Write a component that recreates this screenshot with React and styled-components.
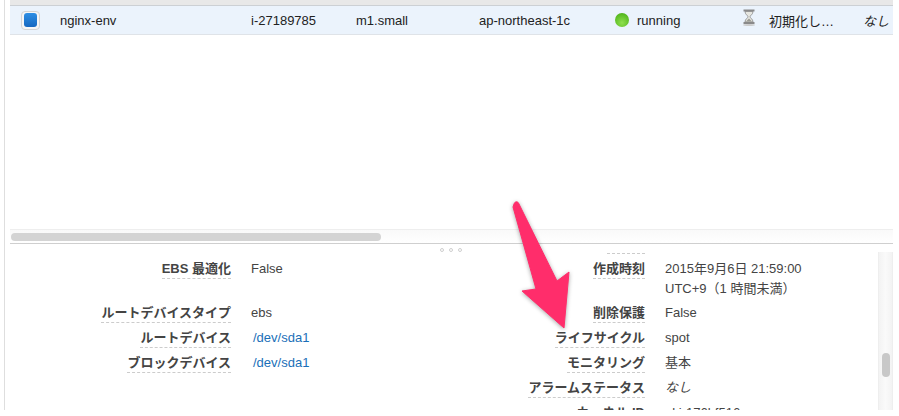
import React from "react";
import styled, { createGlobalStyle } from "styled-components";

const Global = createGlobalStyle`
  html, body { margin: 0; padding: 0; background: #fff; }
  body { font-family: "Liberation Sans", "Noto Sans CJK JP", sans-serif; font-size: 13px; }
`;

const Frame = styled.div`
  position: relative;
  width: 889px;
  height: 410px;
  margin-left: 4px;
  padding-left: 5px;
  box-sizing: border-box;
  border-left: 1px solid #dedede;
  display: flex;
  flex-direction: column;
  overflow: hidden;
`;
const HeaderBar = styled.div`
  height: 5px;
  flex: none;
  background: #e8e8e8;
  border-bottom: 1px solid #ccd0d4;
`;
const Row = styled.div`
  height: 29px;
  flex: none;
  box-sizing: border-box;
  display: grid;
  grid-template-columns: 50px 191px 105px 123px 136px 128px 120px 1fr;
  align-items: center;
  background: #ebf3fc;
  border-bottom: 1px solid #dfe3e8;
  color: #222;
  white-space: nowrap;
`;
const CheckCell = styled.div`
  display: flex;
  padding-left: 11px;
`;
const Check = styled.div`
  width: 19px;
  height: 19px;
  box-sizing: border-box;
  border: 1px solid #d4d4d4;
  border-radius: 4px;
  background: #f6f6f6;
  display: flex;
  align-items: center;
  justify-content: center;
`;
const CheckFill = styled.div`
  width: 13px;
  height: 14px;
  border-radius: 3px;
  background: linear-gradient(#2f8fe4, #1668c0);
`;
const IconCell = styled.div`
  display: flex;
  align-items: center;
  gap: ${(p) => p.$gap}px;
`;
const Dot = styled.div`
  width: 14px;
  height: 14px;
  border-radius: 50%;
  background: radial-gradient(circle at 50% 70%, #8fe04e, #55b81f 75%, #3f9a17);
`;
const Italic = styled.div`
  font-style: italic;
`;
const Spacer = styled.div`
  flex: 1;
`;
const ScrollTrack = styled.div`
  height: 14px;
  flex: none;
  box-sizing: border-box;
  border-top: 1px solid #eeeeee;
  background: linear-gradient(#f9f9f9, #fff);
  display: flex;
  align-items: center;
  padding-left: 1px;
`;
const ScrollThumb = styled.div`
  width: 370px;
  height: 8px;
  border-radius: 4px;
  background: #d4d4d4;
`;
const Divider = styled.div`
  height: 9px;
  flex: none;
  border-top: 1px solid #cfcfcf;
  display: flex;
  justify-content: center;
  align-items: flex-end;
  gap: 5px;
  padding-right: 2px;
  box-sizing: border-box;
`;
const GripDot = styled.div`
  width: 4px;
  height: 4px;
  box-sizing: border-box;
  border: 1px solid #cfcfcf;
  border-radius: 50%;
`;
const Details = styled.div`
  height: 158px;
  flex: none;
  display: grid;
  grid-template-columns: 221px 147px 267px 1fr 15px;
  overflow: hidden;
`;
const Rows = styled.div`
  display: flex;
  flex-direction: column;
  grid-column: ${(p) => p.$col};
`;
const DRow = styled.div`
  display: grid;
  grid-template-columns: ${(p) => p.$label}px 240px;
  column-gap: 20px;
  height: ${(p) => p.$h}px;
  flex: none;
  padding-top: ${(p) => p.$pt || 0}px;
  box-sizing: border-box;
`;
const LabelCell = styled.div`
  text-align: right;
`;
const Label = styled.span`
  display: inline-block;
  font-weight: 700;
  color: #444;
  line-height: 16px;
  padding-bottom: 1px;
  border-bottom: 1px dashed #ccc;
  white-space: nowrap;
`;
const Value = styled.div`
  color: ${(p) => (p.$link ? "#1a6fb8" : "#444")};
  font-style: ${(p) => (p.$italic ? "italic" : "normal")};
  line-height: 20px;
  margin-left: ${(p) => (p.$link ? 2 : 0)}px;
  margin-top: -2px;
  white-space: nowrap;
`;
const VTrack = styled.div`
  grid-column: 5;
  background: linear-gradient(90deg, #f3f3f3, #fafafa 50%, #f3f3f3);
  border-left: 1px solid #eee;
  border-right: 1px solid #eee;
  box-sizing: border-box;
  display: flex;
  justify-content: center;
  padding-top: 101px;
`;
const VThumb = styled.div`
  width: 8px;
  height: 24px;
  border-radius: 4px;
  background: #c8c8c8;
`;
const StubLabel = styled.div`
  width: 38px;
  margin-left: 229px;
  border-bottom: 1px dashed #ccc;
  height: 1px;
`;
const Arrow = styled.svg`
  position: absolute;
  left: 496px;
  top: 198px;
  filter: drop-shadow(0 1px 2px rgba(0, 0, 0, 0.35));
`;
const HourglassSvg = styled.svg`
  margin-bottom: 5px;
  margin-left: -1px;
  margin-right: 1px;
`;

const Hourglass = () => (
  <HourglassSvg width="14" height="17" viewBox="0 0 14 17">
    <rect x="1.5" y="0.5" width="11" height="2" fill="#8a8a8a" />
    <rect x="1.5" y="13" width="11" height="2" fill="#8a8a8a" />
    <path d="M3 2.5 H11 C11 5.5 8 6.5 8 7.8 C8 9 11 10 11 13 H3 C3 10 6 9 6 7.8 C6 6.5 3 5.5 3 2.5 Z" fill="#e6e6e0" stroke="#888" strokeWidth="0.8" />
    <path d="M4 12.6 L7 9.5 L10 12.6 Z" fill="#9a9a92" />
    <ellipse cx="7" cy="16" rx="6" ry="1" fill="#ccc" />
  </HourglassSvg>
);

const leftRows = [
  { h: 53, pt: 9, label: "EBS 最適化", value: "False" },
  { h: 25, label: "ルートデバイスタイプ", value: "ebs" },
  { h: 25, label: "ルートデバイス", value: "/dev/sda1", link: true },
  { h: 25, label: "ブロックデバイス", value: "/dev/sda1", link: true },
];
const rightRows = [
  { h: 51, pt: 7, label: "作成時刻", value: ["2015年9月6日 21:59:00", "UTC+9（1 時間未満）"] },
  { h: 25, label: "削除保護", value: ["False"] },
  { h: 25, label: "ライフサイクル", value: ["spot"] },
  { h: 25, label: "モニタリング", value: ["基本"] },
  { h: 25, label: "アラームステータス", value: ["なし"], italic: true },
  { h: 25, label: "カーネル ID", value: ["aki-176bf516"] },
];

export default function App() {
  return (
    <>
      <Global />
      <Frame>
        <HeaderBar />
        <Row>
          <CheckCell>
            <Check>
              <CheckFill />
            </Check>
          </CheckCell>
          <div>nginx-env</div>
          <div>i-27189785</div>
          <div>m1.small</div>
          <div>ap-northeast-1c</div>
          <IconCell $gap={8}>
            <Dot />
            <span>running</span>
          </IconCell>
          <IconCell $gap={12}>
            <Hourglass />
            <span>初期化し…</span>
          </IconCell>
          <Italic>なし</Italic>
        </Row>
        <Spacer />
        <ScrollTrack>
          <ScrollThumb />
        </ScrollTrack>
        <Divider>
          <GripDot />
          <GripDot />
          <GripDot />
        </Divider>
        <Details>
          <Rows $col={1}>
            {leftRows.map((r) => (
              <DRow key={r.label} $label={221} $h={r.h} $pt={r.pt}>
                <LabelCell>
                  <Label>{r.label}</Label>
                </LabelCell>
                <Value $link={r.link}>{r.value}</Value>
              </DRow>
            ))}
          </Rows>
          <Rows $col={3}>
            <StubLabel />
            {rightRows.map((r) => (
              <DRow key={r.label} $label={267} $h={r.h} $pt={r.pt}>
                <LabelCell>
                  <Label>{r.label}</Label>
                </LabelCell>
                <Value $italic={r.italic}>
                  {r.value.map((v) => (
                    <div key={v}>{v}</div>
                  ))}
                </Value>
              </DRow>
            ))}
          </Rows>
          <VTrack>
            <VThumb />
          </VTrack>
        </Details>
        <Arrow width="75" height="140" viewBox="0 0 75 140">
          <path
            d="M13 6 C14 3 17 3 18 6 L56 83 L68 74 L63 130 L21 93 L35 91 L12 9 Z"
            fill="#ff2d6b"
            stroke="#ff2d6b"
            strokeWidth="1"
            strokeLinejoin="round"
          />
        </Arrow>
      </Frame>
    </>
  );
}
